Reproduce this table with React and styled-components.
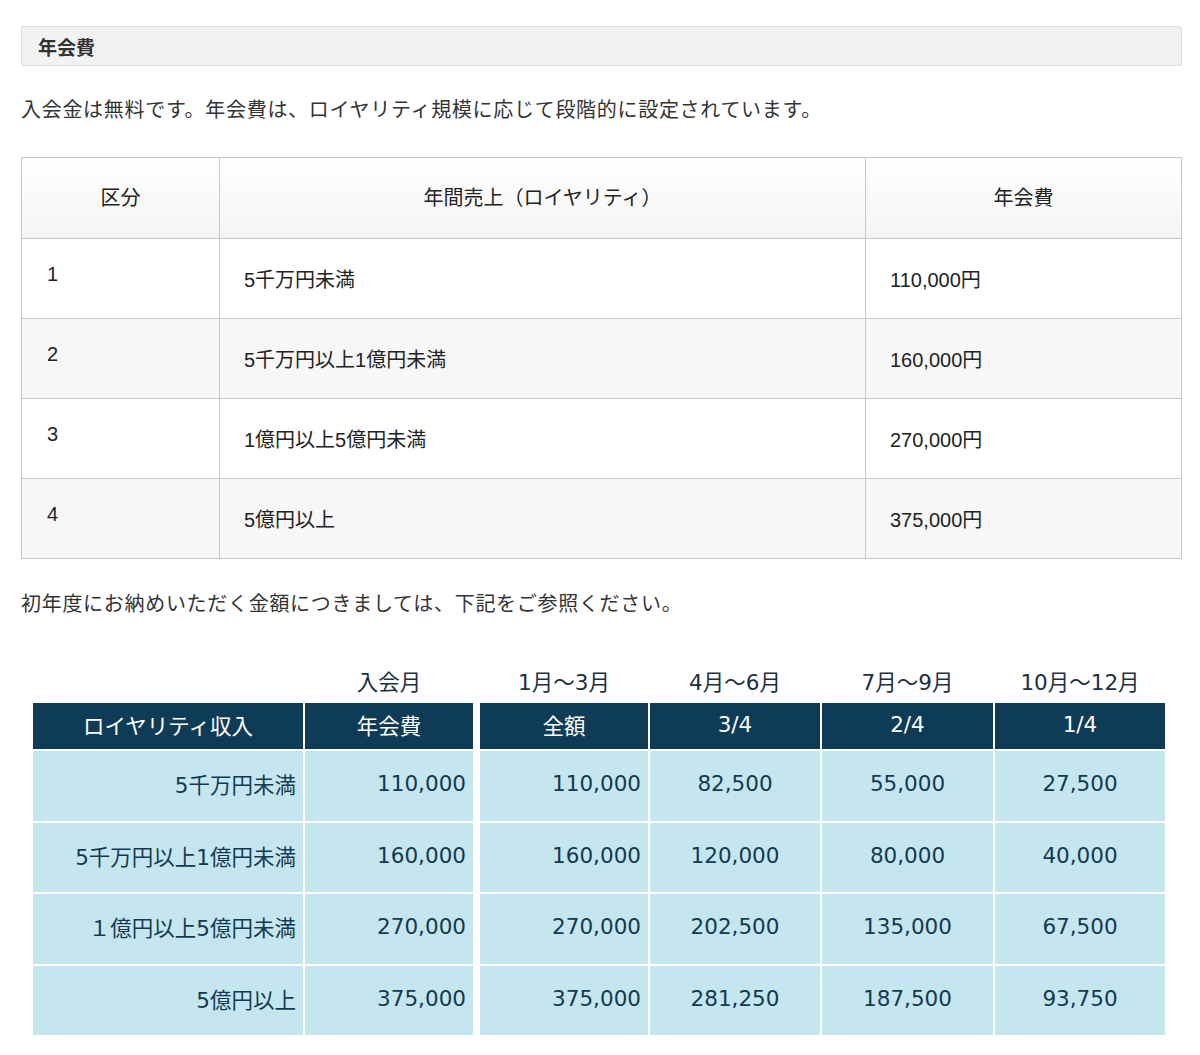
import React from "react";
import styled, { createGlobalStyle } from "styled-components";

const Global = createGlobalStyle`
  html, body { margin: 0; padding: 0; background: #fff; }
  body {
    font-family: "Liberation Sans", "Noto Sans CJK JP", sans-serif;
    color: #333;
  }
`;

const Page = styled.div`
  padding: 26px 18px 0 21px;
`;

const SectionTitle = styled.h2`
  margin: 0;
  box-sizing: border-box;
  height: 40px;
  display: flex;
  align-items: center;
  padding: 0 16px;
  background: #f2f2f2;
  border: 1px solid #dcdcdc;
  border-radius: 2px;
  font-size: 19px;
  font-weight: bold;
  color: #333;
`;

const Para = styled.p`
  margin: ${(p) => p.$mt}px 0 0;
  font-size: 20px;
  line-height: 30px;
  letter-spacing: 0.7px;
  color: #333;
`;

const FeeTable = styled.table`
  margin-top: 32px;
  width: 100%;
  border-collapse: collapse;
  font-size: 20px;
  line-height: 24px;
  color: #222;
`;

const HeadRow = styled.tr`
  height: 81px;
`;

const Th = styled.th`
  padding: 0;
  border: 1px solid #c8c8c8;
  background: linear-gradient(#ffffff, #f4f4f4);
  font-weight: normal;
  text-align: center;
  width: ${(p) => p.$w || "auto"};
`;

const Tr = styled.tr`
  height: 80px;
  background: ${(p) => (p.$alt ? "#f7f7f7" : "#ffffff")};
`;

const Td = styled.td`
  border: 1px solid #c8c8c8;
  padding: ${(p) => (p.$first ? "23px 0 0 25px" : "2px 0 0 24px")};
  vertical-align: ${(p) => (p.$first ? "top" : "middle")};
`;

const Schedule = styled.div`
  margin-top: 40px;
  margin-left: 12px;
  display: grid;
  grid-template-columns: 270px 168px 173px 170px 171px 170px;
  grid-template-rows: 42px 46px repeat(4, 69.5px);
  column-gap: 2px;
  row-gap: 2px;
  font-family: "DejaVu Sans", "Noto Sans CJK JP", sans-serif;
  font-size: 21.5px;
`;

const Label = styled.div`
  display: flex;
  align-items: center;
  justify-content: center;
  color: #1b3041;
  margin-left: ${(p) => (p.$split ? "5px" : "0")};
`;

const Head = styled.div`
  display: flex;
  align-items: center;
  justify-content: center;
  padding-bottom: 3px;
  background: #0e3b55;
  color: #fff;
  margin-left: ${(p) => (p.$split ? "5px" : "0")};
`;

const Cell = styled.div`
  display: flex;
  align-items: center;
  justify-content: ${(p) => (p.$center ? "center" : "flex-end")};
  padding-right: ${(p) => (p.$center ? "0" : "7px")};
  padding-bottom: 4px;
  background: #c5e6ef;
  color: #123a52;
  margin-left: ${(p) => (p.$split ? "5px" : "0")};
`;

const feeRows = [
  ["1", "5千万円未満", "110,000円"],
  ["2", "5千万円以上1億円未満", "160,000円"],
  ["3", "1億円以上5億円未満", "270,000円"],
  ["4", "5億円以上", "375,000円"],
];

const scheduleRows = [
  ["5千万円未満", "110,000", "110,000", "82,500", "55,000", "27,500"],
  ["5千万円以上1億円未満", "160,000", "160,000", "120,000", "80,000", "40,000"],
  ["１億円以上5億円未満", "270,000", "270,000", "202,500", "135,000", "67,500"],
  ["5億円以上", "375,000", "375,000", "281,250", "187,500", "93,750"],
];

const labels = ["", "入会月", "1月～3月", "4月～6月", "7月～9月", "10月～12月"];
const heads = ["ロイヤリティ収入", "年会費", "全額", "3/4", "2/4", "1/4"];

export default function App() {
  return (
    <Page>
      <Global />
      <SectionTitle>年会費</SectionTitle>
      <Para $mt={29}>
        入会金は無料です。年会費は、ロイヤリティ規模に応じて段階的に設定されています。
      </Para>
      <FeeTable>
        <thead>
          <HeadRow>
            <Th $w="197px">区分</Th>
            <Th>年間売上（ロイヤリティ）</Th>
            <Th $w="315px">年会費</Th>
          </HeadRow>
        </thead>
        <tbody>
          {feeRows.map((r, i) => (
            <Tr key={r[0]} $alt={i % 2 === 1}>
              <Td $first>{r[0]}</Td>
              <Td>{r[1]}</Td>
              <Td>{r[2]}</Td>
            </Tr>
          ))}
        </tbody>
      </FeeTable>
      <Para $mt={30}>
        初年度にお納めいただく金額につきましては、下記をご参照ください。
      </Para>
      <Schedule>
        {labels.map((l, i) => (
          <Label key={"l" + i} $split={i === 2}>
            {l}
          </Label>
        ))}
        {heads.map((h, i) => (
          <Head key={"h" + i} $split={i === 2}>
            {h}
          </Head>
        ))}
        {scheduleRows.map((r, ri) =>
          r.map((c, ci) => (
            <Cell key={ri + "-" + ci} $split={ci === 2} $center={ci >= 3}>
              {c}
            </Cell>
          ))
        )}
      </Schedule>
    </Page>
  );
}
